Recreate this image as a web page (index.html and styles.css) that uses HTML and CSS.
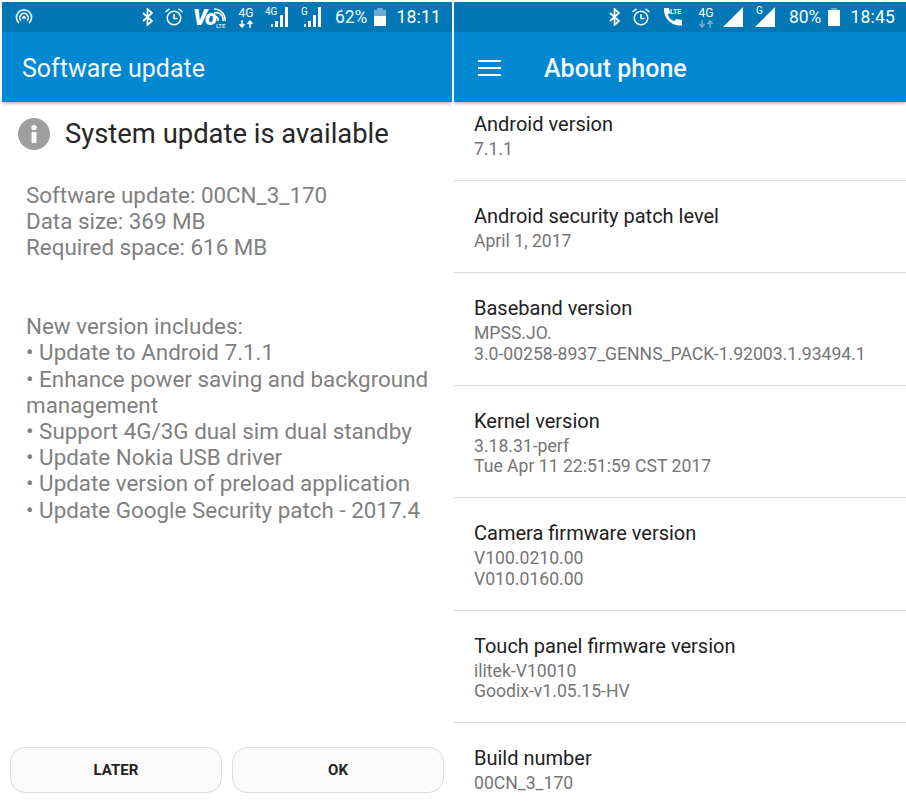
FILE: index.html
```html
<!DOCTYPE html>
<html lang="en">
<head>
    <meta charset="UTF-8">
    <meta name="viewport" content="width=device-width, initial-scale=1.0">
    <title>Software update / About phone</title>
    <link rel="stylesheet" href="styles.css">
</head>
<body>
    <div class="screens">
        <!-- left phone -->
        <div class="screen screen-left">
            <div class="statusbar">
                <svg class="ic hotspot" width="18" height="18" viewBox="0 0 18 18">
                    <path d="M4 15.200A7.600 7.600 0 1 1 14 15.200" fill="none" stroke="#e3f1f9" stroke-width="1.7"/>
                    <path d="M6 12.600A4.200 4.200 0 1 1 12 12.600" fill="none" stroke="#e3f1f9" stroke-width="1.7"/>
                    <circle cx="9" cy="9.500" r="1.800" fill="#e3f1f9"/>
                </svg>
                <div class="spacer"></div>
                <svg class="ic bt" width="12" height="18" viewBox="0 0 12 18"><path d="M1 5l9 8-4.500 4V1L10 5 1 13" fill="none" stroke="#fff" stroke-width="1.7"/></svg>
                <svg class="ic clock" width="20" height="20" viewBox="0 0 20 20">
                    <circle cx="10" cy="11" r="6.800" fill="none" stroke="#fff" stroke-width="1.5"/>
                    <path d="M10 7v4.500h3.500M1.500 5l4-3.200M18.500 5l-4-3.200" fill="none" stroke="#fff" stroke-width="1.5"/>
                </svg>
                <div class="volte">
                    <span class="vo">Vo</span>
                    <svg class="volte-waves" width="14" height="15" viewBox="0 0 14 15"><path d="M1 5a7 7 0 0 1 9 8M1 1a11 11 0 0 1 11 12M1 9a3 3 0 0 1 4 4" fill="none" stroke="#fff" stroke-width="1.6"/></svg>
                    <span class="volte-lte">LTE</span>
                </div>
                <div class="net">
                    <span class="net-label">4G</span>
                    <svg class="net-arrows" width="18" height="8" viewBox="0 0 18 8"><path d="M5 0v6M2.500 4L5 7l2.500-3M13 8V2M10.500 4L13 1l2.500 3" fill="none" stroke="#fff" stroke-width="1.5"/></svg>
                </div>
                <div class="signal-wrap">
                    <span class="sig-label">4G</span>
                    <div class="bars"><i class="b1"></i><i class="b2"></i><i class="b3"></i><i class="b4"></i></div>
                </div>
                <div class="signal-wrap signal-g">
                    <span class="sig-label">G</span>
                    <div class="bars"><i class="b1"></i><i class="b2"></i><i class="b3"></i><i class="b4"></i></div>
                </div>
                <span class="pct">62%</span>
                <div class="battery"><div class="battery-fill" style="height: 62%"></div></div>
                <span class="time">18:11</span>
            </div>
            <div class="appbar"><span class="appbar-title">Software update</span></div>

            <div class="update-head">
                <svg class="info" width="32" height="32" viewBox="0 0 32 32">
                    <circle cx="16" cy="16" r="16" fill="#9e9e9e"/>
                    <rect x="13.600" y="14" width="4.800" height="11" fill="#fff"/>
                    <circle cx="16" cy="9.600" r="2.700" fill="#fff"/>
                </svg>
                <span class="update-title">System update is available</span>
            </div>

            <div class="update-text">
                <div>Software update: 00CN_3_170</div>
                <div>Data size: 369 MB</div>
                <div>Required space: 616 MB</div>
                <div class="update-gap">New version includes:</div>
                <div>• Update to Android 7.1.1</div>
                <div>• Enhance power saving and background management</div>
                <div>• Support 4G/3G dual sim dual standby</div>
                <div>• Update Nokia USB driver</div>
                <div>• Update version of preload application</div>
                <div>• Update Google Security patch - 2017.4</div>
            </div>

            <div class="buttons">
                <div class="btn">LATER</div>
                <div class="btn">OK</div>
            </div>
        </div>

        <!-- right phone -->
        <div class="screen screen-right">
            <div class="statusbar">
                <div class="spacer"></div>
                <svg class="ic bt" width="12" height="18" viewBox="0 0 12 18"><path d="M1 5l9 8-4.500 4V1L10 5 1 13" fill="none" stroke="#fff" stroke-width="1.7"/></svg>
                <svg class="ic clock" width="20" height="20" viewBox="0 0 20 20">
                    <circle cx="10" cy="11" r="6.800" fill="none" stroke="#fff" stroke-width="1.5"/>
                    <path d="M10 7v4.500h3.500M1.500 5l4-3.200M18.500 5l-4-3.200" fill="none" stroke="#fff" stroke-width="1.5"/>
                </svg>
                <div class="call">
                    <svg width="20" height="20" viewBox="0 0 20 20"><path d="M1 1h5l1 5-2.200 1.800c1.200 3 3.400 5.200 6.400 6.400L13 12l6 1v5.500h-2C8 18.500 1 11 1 3z" fill="#fff"/></svg>
                    <span class="call-lte">LTE</span>
                </div>
                <div class="net net-dim">
                    <span class="net-label">4G</span>
                    <svg class="net-arrows" width="18" height="8" viewBox="0 0 18 8"><path d="M5 0v6M2.500 4L5 7l2.500-3M13 8V2M10.500 4L13 1l2.500 3" fill="none" stroke="#6fb0d6" stroke-width="1.5"/></svg>
                </div>
                <svg class="ic tri" width="20" height="20" viewBox="0 0 20 20"><path d="M0 20L20 0v20z" fill="#fff"/></svg>
                <div class="tri-wrap">
                    <span class="sig-label">G</span>
                    <svg width="20" height="20" viewBox="0 0 20 20"><path d="M0 20L20 0v20z" fill="#fff"/></svg>
                </div>
                <span class="pct">80%</span>
                <div class="battery"><div class="battery-fill" style="height: 100%"></div></div>
                <span class="time">18:45</span>
            </div>
            <div class="appbar appbar-about">
                <div class="hamburger"><i></i><i></i><i></i></div>
                <span class="appbar-title about-title">About phone</span>
            </div>

            <div class="about-list">
                <div class="row row-first">
                    <div class="row-title">Android version</div>
                    <div class="row-sub">7.1.1</div>
                </div>
                <div class="row">
                    <div class="row-title">Android security patch level</div>
                    <div class="row-sub">April 1, 2017</div>
                </div>
                <div class="row">
                    <div class="row-title">Baseband version</div>
                    <div class="row-sub">MPSS.JO.<br>3.0-00258-8937_GENNS_PACK-1.92003.1.93494.1</div>
                </div>
                <div class="row">
                    <div class="row-title">Kernel version</div>
                    <div class="row-sub">3.18.31-perf<br>Tue Apr 11 22:51:59 CST 2017</div>
                </div>
                <div class="row">
                    <div class="row-title">Camera firmware version</div>
                    <div class="row-sub">V100.0210.00<br>V010.0160.00</div>
                </div>
                <div class="row">
                    <div class="row-title">Touch panel firmware version</div>
                    <div class="row-sub">ilitek-V10010<br>Goodix-v1.05.15-HV</div>
                </div>
                <div class="row row-last">
                    <div class="row-title">Build number</div>
                    <div class="row-sub">00CN_3_170</div>
                </div>
            </div>
        </div>
    </div>
</body>
</html>
```

FILE: styles.css
```css
html, body { margin: 0; padding: 0; background: #fff; }
body { width: 906px; height: 804px; overflow: hidden; font-family: Roboto, "Liberation Sans", sans-serif; }
.screens { display: flex; height: 804px; padding-top: 2px; box-sizing: border-box; }
.screen { height: 802px; display: flex; flex-direction: column; overflow: hidden; }
.screen-left { width: 450px; margin-left: 2px; margin-right: 2px; }
.screen-right { width: 452px; }

.statusbar { height: 30px; flex: none; background: #0277b5; display: flex; align-items: center; color: #fff; padding: 0 11px 0 13px; box-sizing: border-box; }
.spacer { flex: 1; }
.ic { flex: none; display: block; }
.clock { margin-left: 10px; }
.pct { font-size: 17.5px; margin-left: 14px; color: #f1f8fc; }
.time { font-size: 17.5px; margin-left: 10px; letter-spacing: 0.2px; }
.battery { width: 12px; height: 16px; margin-top: 2px; background: rgba(255,255,255,0.4); margin-left: 7px; display: flex; align-items: flex-end; position: relative; }
.battery::before { content: ""; position: absolute; left: 3px; top: -2px; width: 6px; height: 2px; background: rgba(255,255,255,0.4); }
.battery-fill { width: 100%; background: #fff; }

.volte { position: relative; width: 34px; height: 21px; margin-left: 9px; }
.vo { font-size: 22px; font-weight: 900; font-style: italic; line-height: 20px; letter-spacing: -1.5px; position: absolute; left: 0; top: 1px; }
.volte-waves { position: absolute; left: 20px; top: 1px; }
.volte-lte { position: absolute; left: 23px; top: 15px; font-size: 6px; line-height: 7px; }
.net { width: 18px; margin-left: 10px; display: flex; flex-direction: column; align-items: center; gap: 1px; }
.net-label { font-size: 12px; line-height: 12px; }
.net-arrows { display: block; }
.net-dim { margin-left: 14px; }
.signal-wrap { position: relative; width: 23px; height: 20px; margin-left: 10px; }
.signal-g { width: 20px; margin-left: 13px; }
.sig-label { position: absolute; left: 0; top: 0; font-size: 10px; line-height: 10px; }
.bars { position: absolute; right: 0; bottom: 0; display: flex; align-items: flex-end; gap: 2px; }
.bars i { display: block; width: 3px; background: #fff; }
.bars .b1 { width: 2px; height: 3px; background: #cfe6f3; }
.bars .b2 { height: 6px; }
.bars .b3 { height: 12px; }
.bars .b4 { height: 20px; }

.call { position: relative; width: 20px; height: 20px; margin-left: 12px; }
.call svg { display: block; }
.call-lte { position: absolute; left: 7px; top: 1px; font-size: 7px; font-weight: 700; line-height: 8px; }
.tri { margin-left: 8px; }
.tri-wrap { position: relative; width: 20px; height: 20px; margin-left: 12px; }
.tri-wrap svg { display: block; }
.tri-wrap .sig-label { left: 1px; top: -1px; }

.appbar { height: 70px; flex: none; background: #0288d1; display: flex; align-items: center; color: #fff; box-shadow: 0 2px 3px rgba(0,0,0,0.25); position: relative; box-sizing: border-box; padding-top: 2px; }
.appbar-title { font-size: 25px; margin-left: 20px; color: #f3fafd; }
.hamburger { margin-left: 24px; width: 23px; display: flex; flex-direction: column; gap: 4.5px; }
.hamburger i { display: block; height: 2.5px; background: #fff; }
.about-title { margin-left: 43px; font-weight: 500; }

.update-head { display: flex; align-items: center; margin: 16px 0 0 16px; height: 32px; }
.info { flex: none; }
.update-title { font-size: 27.4px; color: #262626; margin-left: 15px; white-space: nowrap; }
.update-text { margin: 32px 20px 0 24px; font-size: 22.4px; line-height: 26.2px; color: #808080; flex: 1; }
.update-gap { margin-top: 52.5px; }

.buttons { display: flex; gap: 10px; padding: 0 8px 11px; height: 46px; flex: none; }
.btn { flex: 1; border: 1px solid #dcdcdc; border-radius: 15px; background: #fafafa; display: flex; align-items: center; justify-content: center; font-size: 15px; font-weight: 700; color: #222; }

.about-list { flex: none; margin-top: 9px; }
.row { border-bottom: 1px solid #d9d9d9; padding: 22px 20px 20.9px; }
.row-first { padding-top: 0; }
.row-last { border-bottom: 0; }
.row-title { font-size: 20px; line-height: 26px; color: #212121; }
.row-sub { font-size: 17.6px; line-height: 20.3px; color: #757575; margin-top: 2px; }
```
